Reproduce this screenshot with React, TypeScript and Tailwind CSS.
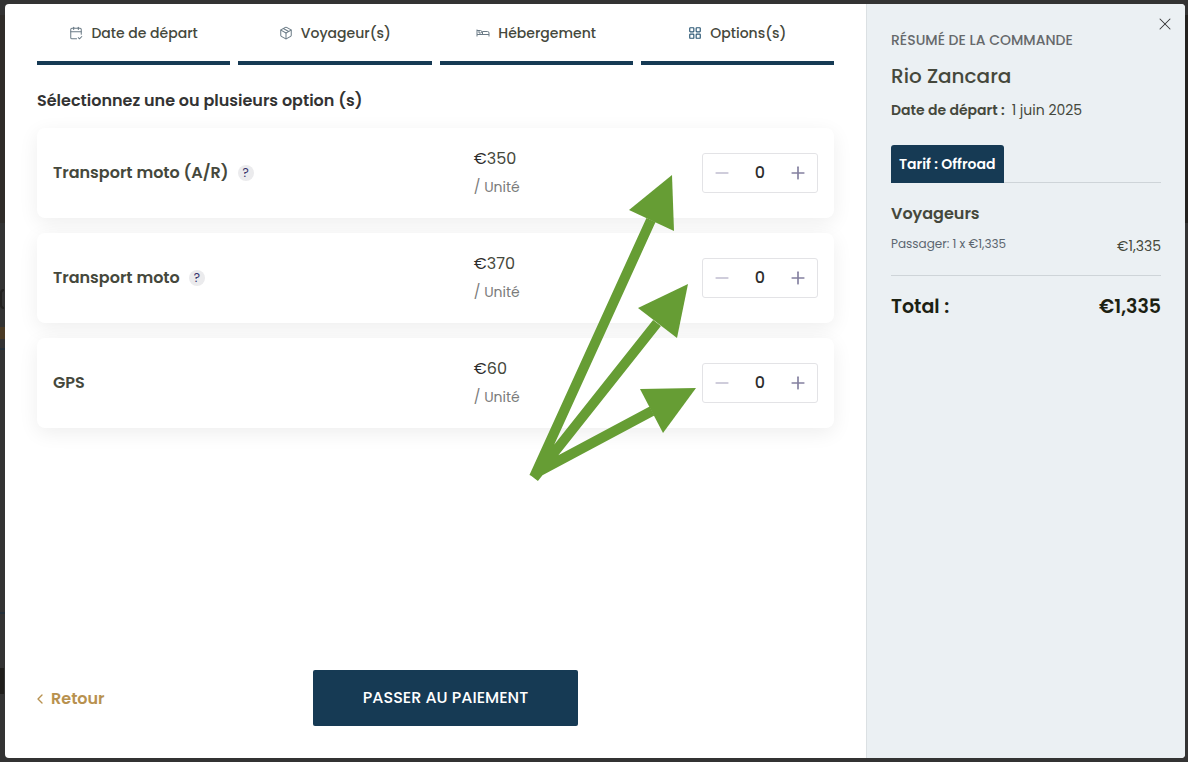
import { useState } from 'react'
import type { ReactNode } from 'react'
import { CalendarCheck2, ChevronLeft, LayoutGrid, Minus, Package, Plus, X } from 'lucide-react'

const BedIcon = () => (
  <svg viewBox="0 0 28 28" width="14" height="14" fill="none" stroke="currentColor" strokeWidth="2">
    <path d="M2 7v14M2 17h24M26 21v-7a3 3 0 0 0-3-3H13v6" />
    <path d="M2 9h7a2 2 0 0 1 0 5H6V9" />
  </svg>
)

const steps: { label: string; icon: ReactNode }[] = [
  { label: 'Date de départ', icon: <CalendarCheck2 size={14} strokeWidth={1.75} className="text-[#6b7b86]" /> },
  { label: 'Voyageur(s)', icon: <Package size={14} strokeWidth={1.75} className="text-[#6b7b86]" /> },
  { label: 'Hébergement', icon: <span className="text-[#6b7b86]"><BedIcon /></span> },
  { label: 'Options(s)', icon: <LayoutGrid size={14} strokeWidth={2} className="text-[#2b5774]" /> },
]

const options = [
  { id: 'transport-ar', name: 'Transport moto (A/R)', price: '350', help: true },
  { id: 'transport', name: 'Transport moto', price: '370', help: true },
  { id: 'gps', name: 'GPS', price: '60', help: false },
]

function Stepper({ id, name }: { id: string; name: string }) {
  const [count, setCount] = useState(0)

  return (
    <div className="flex h-10 w-[116px] items-center rounded-[3px] border border-[#e3e3e6]">
      <button
        aria-label={`Retirer ${name}`}
        onClick={() => setCount(Math.max(0, count - 1))}
        className="flex h-full w-[38px] shrink-0 items-center justify-center text-[#c0bdd0]"
      >
        <Minus size={20} strokeWidth={2} />
      </button>
      <input
        id={id}
        aria-label={name}
        value={count}
        onChange={(e) => setCount(Number(e.target.value) || 0)}
        className="w-full min-w-0 bg-transparent text-center text-base font-medium text-[#2d2d2d] outline-none"
      />
      <button
        aria-label={`Ajouter ${name}`}
        onClick={() => setCount(count + 1)}
        className="flex h-full w-[38px] shrink-0 items-center justify-center text-[#8480a0]"
      >
        <Plus size={20} strokeWidth={2} />
      </button>
    </div>
  )
}

function Arrows() {
  return (
    <svg
      aria-hidden="true"
      viewBox="528 174 170 308"
      className="pointer-events-none absolute right-[136px] top-[46px] h-[308px] w-[170px]"
      fill="#669d34"
    >
      <g stroke="#669d34" strokeWidth="10">
        <path d="M534 477 651 220M534 478 657 323M534 474 652 411" />
      </g>
      <path d="M672 175 674 231 629 210z" />
      <path d="M688 284 677 338 638 308z" />
      <path d="M696 388 663 433 640 389z" />
    </svg>
  )
}

export default function App() {
  return (
    <div className="flex min-h-screen bg-[#333333] py-1 font-['Poppins',sans-serif] text-[#45483c]">
      {/* dimmed page showing on both sides of the dialog */}
      <div aria-hidden="true" className="flex w-[5px] shrink-0 flex-col">
        <div className="mt-[11px] h-[208px] bg-[#2f2c29]" />
        <div className="mt-[66px] h-[20px] w-[4px] rounded-l-full border-2 border-r-0 border-[#232220]" />
        <div className="mt-[18px] h-[12px] bg-[#4a3a24]" />
        <div className="mt-[9px] h-[2px] bg-[#23303a]" />
        <div className="mt-[262px] h-[2px] bg-[#23303a]" />
        <div className="mt-[54px] h-[26px] w-[4px] bg-[#1f1e1b]" />
      </div>
      <div className="relative flex flex-1 overflow-hidden rounded-[4px] bg-white">
        <main className="flex flex-1 flex-col px-8 pb-8">
          <ol className="grid grid-cols-4 gap-2">
            {steps.map(({ label, icon }) => (
              <li
                key={label}
                className="flex h-[61px] items-center justify-center gap-2 border-b-4 border-[#163a54] text-sm font-medium"
              >
                {icon}
                {label}
              </li>
            ))}
          </ol>

          <h2 className="mb-[15px] mt-6 text-base font-semibold text-[#333333]">
            Sélectionnez une ou plusieurs option (s)
          </h2>

          <div className="relative flex flex-col gap-[15px]">
            {options.map(({ id, name, price, help }) => (
              <div
                key={id}
                className="grid h-[90px] grid-cols-[55%_1fr_auto] items-center rounded-lg bg-white px-4 shadow-[0_5px_20px_rgba(0,0,0,0.07)]"
              >
                <div className="flex items-center gap-[9px]">
                  <label htmlFor={id} className="text-base font-semibold">{name}</label>
                  {help && (
                    <button
                      aria-label={`Aide ${name}`}
                      className="flex size-4 items-center justify-center rounded-full bg-[#ebebed] text-xs text-[#35306b]"
                    >
                      ?
                    </button>
                  )}
                </div>
                <div>
                  <p className="text-base leading-[29px]"><span className="text-[#2d2d2d]">€</span>{price}</p>
                  <p className="text-sm leading-[29px] text-[#7b7b7b]">/ Unité</p>
                </div>
                <Stepper id={id} name={name} />
              </div>
            ))}
            <Arrows />
          </div>

          <div className="mt-auto flex items-center">
            <div className="w-[276px] pt-1">
              <a href="#hebergement" className="inline-flex items-center gap-[3px] text-base font-semibold text-[#b8914f]">
                <ChevronLeft size={16} strokeWidth={2} className="-ml-[5px]" />
                Retour
              </a>
            </div>
            <button className="h-14 w-[265px] rounded-[2px] bg-[#163a54] text-base font-medium text-white">
              PASSER AU PAIEMENT
            </button>
          </div>
        </main>

        <aside className="w-[319px] shrink-0 border-l border-[#dbe0e3] bg-[#ebf0f3] px-6 pt-[26px]">
          <h3 className="text-sm font-medium text-[#66696b]">RÉSUMÉ DE LA COMMANDE</h3>
          <p className="mt-3 text-xl font-medium">Rio Zancara</p>
          <p className="mt-[10px] text-sm">
            <span className="mr-[7px] font-semibold">Date de départ :</span>1 juin 2025
          </p>
          <div className="mt-[25px] flex border-b border-[#ced4d8]">
            <span className="-mb-px flex h-[38px] items-center rounded-t-[3px] bg-[#163a54] px-2 text-sm font-semibold text-white">
              Tarif : Offroad
            </span>
          </div>
          <h4 className="mt-[19px] text-base font-semibold">Voyageurs</h4>
          <div className="mt-2 flex justify-between border-b border-[#ced4d8] pb-[17px]">
            <span className="text-xs leading-5 text-[#5c6670]">Passager: 1 x €1,335</span>
            <span className="text-sm leading-6">€1,335</span>
          </div>
          <div className="mt-[17px] flex justify-between text-[19px] font-semibold leading-7 text-[#1c2112]">
            <span>Total :</span>
            <span>€1,335</span>
          </div>
        </aside>

        <button aria-label="Fermer" className="absolute right-[10px] top-[10px] text-[#333333]">
          <X size={20} strokeWidth={1.25} />
        </button>
      </div>
      <div aria-hidden="true" className="w-[3px] shrink-0">
        <div className="mt-[11px] h-[208px] bg-[#23211e]" />
      </div>
    </div>
  )
}
